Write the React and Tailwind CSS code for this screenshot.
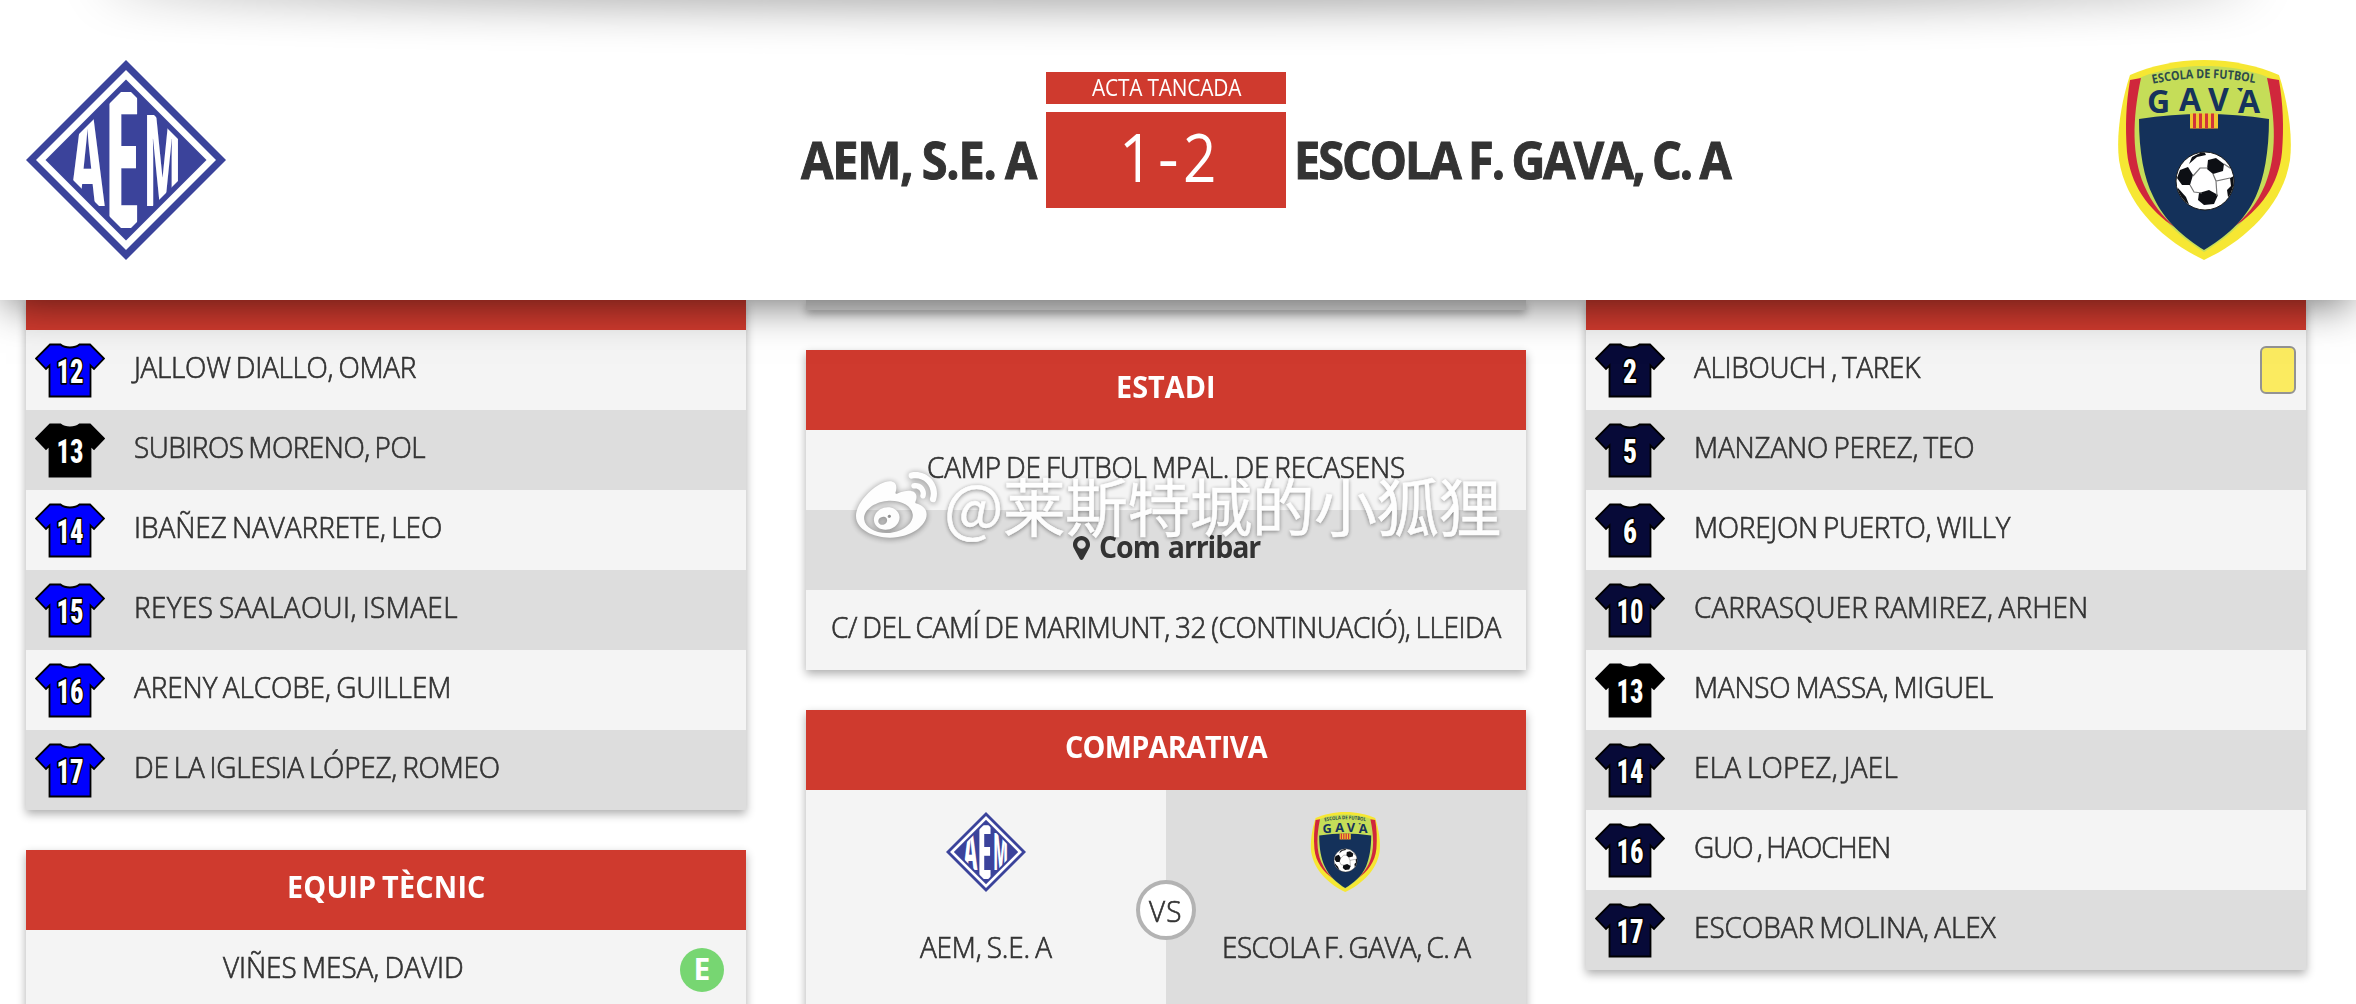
import { useLayoutEffect, useRef, useState } from "react";
import { FaWeibo } from "react-icons/fa";

const HOME = "AEM, S.E. A";
const AWAY = "ESCOLA F. GAVA, C. A";

const homePlayers = [
  { number: 12, name: "JALLOW DIALLO, OMAR", width: 282 },
  { number: 13, name: "SUBIROS MORENO, POL", width: 291, keeper: true },
  { number: 14, name: "IBAÑEZ NAVARRETE, LEO", width: 308 },
  { number: 15, name: "REYES SAALAOUI, ISMAEL", width: 324 },
  { number: 16, name: "ARENY ALCOBE, GUILLEM", width: 317 },
  { number: 17, name: "DE LA IGLESIA LÓPEZ, ROMEO", width: 366 },
];

const awayPlayers = [
  { number: 2, name: "ALIBOUCH , TAREK", width: 226, yellow: true },
  { number: 5, name: "MANZANO PEREZ, TEO", width: 280 },
  { number: 6, name: "MOREJON PUERTO, WILLY", width: 316 },
  { number: 10, name: "CARRASQUER RAMIREZ, ARHEN", width: 394 },
  { number: 13, name: "MANSO MASSA, MIGUEL", width: 299, keeper: true },
  { number: 14, name: "ELA LOPEZ, JAEL", width: 204 },
  { number: 16, name: "GUO , HAOCHEN", width: 196 },
  { number: 17, name: "ESCOBAR MOLINA, ALEX", width: 302 },
];

// Narrows the glyphs by `squeeze`, then tracks the text to fill the width.
const FitText = ({ children, width, squeeze = 0.93, className = "" }) => {
  const ref = useRef(null);
  const [spacing, setSpacing] = useState(0);

  useLayoutEffect(() => {
    const el = ref.current;
    el.style.letterSpacing = "0px";
    const next = (width / squeeze - el.offsetWidth) / children.length;
    el.style.letterSpacing = `${next}px`;
    setSpacing(next);
  }, [children, width, squeeze]);

  return (
    <span className={`inline-block text-left whitespace-nowrap ${className}`} style={{ width }}>
      <span
        ref={ref}
        className="inline-block origin-left"
        style={{ letterSpacing: `${spacing}px`, transform: `scaleX(${squeeze})` }}
      >
        {children}
      </span>
    </span>
  );
};

const Shirt = ({ number, fill }) => (
  <svg className="h-[55px] w-[70px] shrink-0 [-webkit-text-stroke:0]" viewBox="0 0 70 55">
    <path
      d="M15 1.5H25.5Q29 4.5 35 4.5T44.5 1.5H55L69 15.5L59 26L55.5 22.5V53.5H14.5V22.5L11 26L1 15.5Z"
      fill={fill}
      stroke="#000"
      strokeWidth="1.8"
    />
    <text
      className="font-['Roboto'] font-extrabold [font-stretch:75%]"
      x="35"
      y="39.5"
      fill="#fff"
      stroke="#000"
      strokeWidth="3.5"
      paintOrder="stroke"
      strokeLinejoin="round"
      fontSize="34"
      textAnchor="middle"
      textLength={number > 9 ? 27 : 14}
      lengthAdjust="spacingAndGlyphs"
    >
      {number}
    </text>
  </svg>
);

const AemCrest = ({ className }) => (
  <svg className={className} viewBox="0 0 200 200">
    <clipPath id="aem-inner">
      <path d="M100 27L173 100L100 173L27 100Z" />
    </clipPath>
    <path d="M100 0L200 100L100 200L0 100Z" fill="#3b439b" />
    <path d="M100 10L190 100L100 190L10 100Z" fill="#fff" />
    <path d="M100 19.500L180.500 100L100 180.500L19.500 100Z" fill="#3b439b" />
    <g
      className="font-['Open_Sans'] font-bold [font-stretch:75%] [-webkit-text-stroke:0]"
      fill="#fff"
      fontSize="20"
      clipPath="url(#aem-inner)"
    >
      <text transform="translate(44 146) scale(3.3 6.400)">A</text>
      <text transform="translate(78 168) scale(4.3 9.500)">E</text>
      <text transform="translate(118 146) scale(2.4 6.400)">M</text>
    </g>
  </svg>
);

const GavaCrest = ({ className }) => (
  <svg className={`[word-spacing:0] [-webkit-text-stroke:0] ${className}`} viewBox="0 0 200 200">
    <path
      d="M98 0C70 0 45 6 24 15C15 42 10 76 13 100C20 145 56 180 98 200C140 180 177 145 184 100C187 76 182 42 173 15C152 6 127 0 98 0Z"
      fill="#f6e733"
    />
    <path
      d="M33 18C58 8 80 6 98 6C117 6 139 8 164 18C170 45 172 85 164 112C154 152 124 176 98 192C73 176 43 152 33 112C25 85 27 45 33 18Z"
      fill="#c5dd58"
    />
    <path d="M24 20L35 18C26 60 26 96 38 125C46 144 57 157 70 168C42 150 24 124 21 92C19 66 20 44 24 20Z" fill="#d0273c" />
    <path d="M173 20L161 18C170 60 171 96 159 125C151 144 140 157 126 168C155 150 173 124 176 92C178 66 177 44 173 20Z" fill="#d0273c" />
    <path d="M33 59Q98 49 163 59C163 92 158 118 150 136C139 161 118 178 98 190C79 178 58 161 47 136C38 118 33 92 33 59Z" fill="#14315a" />
    <path id="gava-arc" d="M40 25.500Q98 11 158 25" fill="none" />
    <text className="font-['Open_Sans'] font-bold" fill="#2c4a4a" fontSize="12.500">
      <textPath href="#gava-arc" startOffset="7" textLength="103" lengthAdjust="spacingAndGlyphs">
        ESCOLA DE FUTBOL
      </textPath>
    </text>
    <text className="font-['Open_Sans'] font-bold" fill="#16335c" fontSize="32">
      <tspan x="41" y="52.500">G</tspan>
      <tspan x="73" y="50.500">A</tspan>
      <tspan x="102" y="50.500">V</tspan>
      <tspan x="132" y="52.500">A</tspan>
    </text>
    <path d="M131 28H137L135 32Z" fill="#16335c" />
    <path d="M84 53.500H112V68.500H84Z" fill="#f0c52f" />
    <path d="M88.500 53.500V68.500M94.500 53.500V68.500M100.500 53.500V68.500M106.500 53.500V68.500" stroke="#d0333a" strokeWidth="3" />
    <clipPath id="gava-ball">
      <circle cx="99" cy="121" r="28.500" />
    </clipPath>
    <circle cx="99" cy="121" r="29" fill="#fff" stroke="#1b1b1b" strokeWidth="1" />
    <g clipPath="url(#gava-ball)" fill="#0d0f14">
      <path d="M102 100L110 98L118 104L117 111L107 114L101 109Z" />
      <path d="M74 110L82 107L87 115L84 125L76 125L71 118Z" />
      <path d="M93 133L103 130L112 135L108 144L98 145L92 140Z" />
      <path d="M124 118L130 115V132L122 137L121 130L125 126Z" />
      <path d="M86 97L98 91L100 95L91 97L83 104Z" />
      <path d="M72 128L80 137L84 147L72 142Z" />
      <path
        d="M102 108L94 108L87 116M107 114L110 121L124 118M84 125L88 132L96 133M111 136L110 121M118 104L127 110"
        fill="none"
        stroke="#777"
        strokeWidth="1.200"
      />
    </g>
  </svg>
);

const CardTitle = ({ children, width }) => (
  <h2 className="flex h-20 justify-center bg-[#cf3a2e] pt-[17px] text-[30px] leading-[40px] font-bold text-white [-webkit-text-stroke:0]">
    <FitText width={width} squeeze={0.96}>{children}</FitText>
  </h2>
);

const Card = ({ children, className = "" }) => (
  <section className={`shadow-[0_4px_9px_rgba(0,0,0,0.32)] ${className}`}>{children}</section>
);

const Row = ({ children, className = "" }) => (
  <div className={`flex h-20 justify-center bg-[#f4f4f4] pt-[17px] leading-[40px] even:bg-[#ddd] ${className}`}>
    {children}
  </div>
);

const Squad = ({ players, color }) => (
  <Card>
    <div className="h-[30px] bg-[#cf3a2e]" />
    <ul>
      {players.map((player) => (
        <li key={player.number} className="flex h-20 bg-[#f4f4f4] pl-[9px] even:bg-[#ddd]">
          <div className="w-[99px] pt-[13px]">
            <Shirt number={player.number} fill={player.keeper ? "#000" : color} />
          </div>
          <div className="flex-1 pt-[17px] leading-[40px]">
            <FitText width={player.width}>{player.name}</FitText>
          </div>
          {player.yellow ? (
            <div className="mt-4 mr-[10px] h-12 w-9 rounded-[6px] border-2 border-[#939393] bg-[#fbeb60]" />
          ) : null}
        </li>
      ))}
    </ul>
  </Card>
);

const Header = () => (
  <header className="relative z-10 h-[300px] bg-white shadow-[0_10px_40px_-6px_rgba(0,0,0,0.58)]">
    <div className="absolute inset-x-0 top-0 h-20 overflow-hidden">
      <div className="absolute inset-x-[100px] -top-10 h-10 rounded-[50%] shadow-[0_0_50px_rgba(0,0,0,0.48)]" />
    </div>
    <div className="relative flex items-start pr-[50px] pl-[26px]">
      <AemCrest className="mt-[60px] size-[200px]" />
      <div className="flex flex-1 gap-2.5 pt-[72px] text-[52px] leading-[60px] font-bold">
        <div className="flex flex-1 justify-end pt-[57px] [-webkit-text-stroke:1px]">
          <FitText width={235} squeeze={0.9}>{HOME}</FitText>
        </div>
        <div className="flex w-60 flex-col gap-2 text-center text-white">
          <div className="h-8 bg-[#cf3a2e] text-[24px] leading-[29px] font-normal [word-spacing:0] [-webkit-text-stroke:0]">
            <FitText width={149} squeeze={0.87}>ACTA TANCADA</FitText>
          </div>
          <div className="h-24 bg-[#cf3a2e] text-[64px] leading-[90px] font-light [-webkit-text-stroke:1.8px]">
            <FitText width={93} squeeze={0.9}>1 - 2</FitText>
          </div>
        </div>
        <div className="flex-1 pt-[57px] [-webkit-text-stroke:1px]">
          <FitText width={436} squeeze={0.9} className="-ml-0.5">{AWAY}</FitText>
        </div>
      </div>
      <GavaCrest className="mt-[60px] size-[200px]" />
    </div>
  </header>
);

const Watermark = () => (
  <div className="absolute top-[114px] left-[50px] flex items-center whitespace-nowrap text-white opacity-95">
    <FaWeibo className="size-[81px] drop-shadow-[0_1px_3px_rgba(0,0,0,0.45)]" />
    <span className="ml-[7px] pb-1.5 font-['Noto_Sans_CJK_SC',sans-serif] text-[63px] leading-[80px] font-normal [-webkit-text-stroke:0.5px] [text-shadow:0_1px_4px_rgba(0,0,0,0.5)]">
      <FitText width={557} squeeze={1}>@莱斯特城的小狐狸</FitText>
    </span>
  </div>
);

const Pin = () => (
  <svg className="mt-[9px] mr-[9px] h-6 w-[17px]" viewBox="0 0 17 24" fill="currentColor">
    <path
      fillRule="evenodd"
      d="M8.500 0C3.800 0 0 3.800 0 8.500C0 10 .3 11 .8 12L6.800 23Q8.500 25 10.200 23L16.200 12C16.700 11 17 10 17 8.500C17 3.800 13.200 0 8.500 0ZM8.500 4.200A4.300 4.300 0 1 1 8.500 12.800A4.300 4.300 0 0 1 8.500 4.200Z"
    />
  </svg>
);

const Stadium = () => (
  <Card className="relative">
    <CardTitle width={100}>ESTADI</CardTitle>
    <div>
      <Row>
        <FitText width={478}>CAMP DE FUTBOL MPAL. DE RECASENS</FitText>
      </Row>
      <Row className="font-bold [word-spacing:2px] [-webkit-text-stroke:0]">
        <Pin />
        <FitText width={161} squeeze={0.95}>Com arribar</FitText>
      </Row>
      <Row>
        <FitText width={670}>C/ DEL CAMÍ DE MARIMUNT, 32 (CONTINUACIÓ), LLEIDA</FitText>
      </Row>
    </div>
    <Watermark />
  </Card>
);

const Comparison = () => (
  <Card>
    <CardTitle width={202}>COMPARATIVA</CardTitle>
    <div className="relative flex h-[260px] text-center">
      <div className="flex flex-1 flex-col items-center bg-[#f4f4f4] pt-[22px]">
        <AemCrest className="size-20" />
        <FitText width={132} className="mt-[35px] leading-[40px]">{HOME}</FitText>
      </div>
      <div className="flex flex-1 flex-col items-center bg-[#ddd] pt-[22px]">
        <GavaCrest className="size-20" />
        <FitText width={249} className="mt-[35px] leading-[40px]">{AWAY}</FitText>
      </div>
      <div className="absolute top-[90px] left-1/2 size-[60px] -translate-x-1/2 rounded-full border-4 border-[#b3b3b3] bg-white leading-[53px]">
        <FitText width={34}>VS</FitText>
      </div>
    </div>
  </Card>
);

const Staff = () => (
  <Card>
    <CardTitle width={199}>EQUIP TÈCNIC</CardTitle>
    <div className="flex h-20 bg-[#f4f4f4] pr-[22px]">
      <div className="flex-1 pt-[17px] pr-[20px] text-center leading-[40px]">
        <FitText width={241}>VIÑES MESA, DAVID</FitText>
      </div>
      <div className="mt-[18px] size-11 rounded-full bg-[#77d672] text-center leading-[41px] font-bold text-white [-webkit-text-stroke:0]">E</div>
    </div>
  </Card>
);

export default function App() {
  return (
    <div className="h-[1004px] w-[2356px] overflow-hidden bg-white font-['Open_Sans',sans-serif] text-[30px] font-light text-[#333] [word-spacing:-2px] [-webkit-text-stroke:0.7px]">
      <Header />
      <main className="grid grid-cols-[720px_720px_720px] gap-[60px] pl-[26px]">
        <div className="flex flex-col gap-10">
          <Squad players={homePlayers} color="#0000fe" />
          <Staff />
        </div>
        <div className="flex flex-col gap-10">
          <Card className="h-2.5 bg-[#ddd]" />
          <Stadium />
          <Comparison />
        </div>
        <div>
          <Squad players={awayPlayers} color="#070a38" />
        </div>
      </main>
    </div>
  );
}
